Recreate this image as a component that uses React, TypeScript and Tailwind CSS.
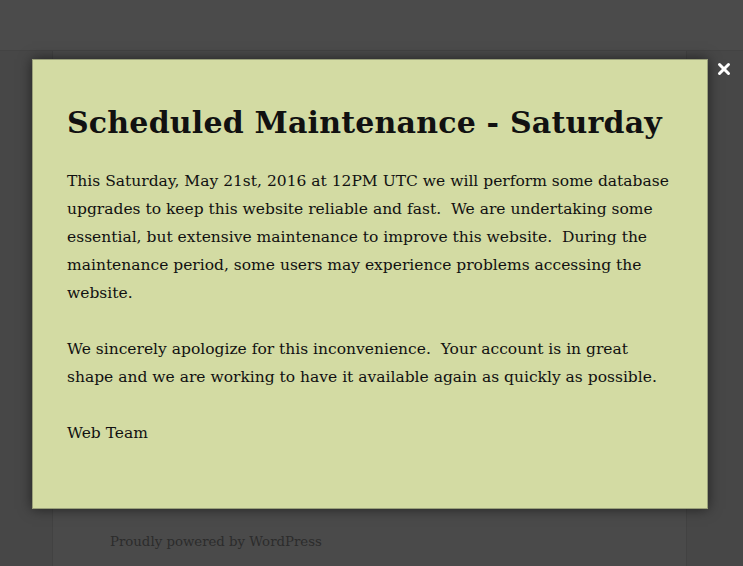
import { X } from "lucide-react";

const serif = "font-['DejaVu_Serif','Liberation_Serif',serif]";

export default function App() {
  return (
    <div className={`relative flex h-[566px] w-full flex-col overflow-hidden bg-[#474747] ${serif}`}>
      {/* Page behind the overlay */}
      <div className="h-[51px] shrink-0 border-b border-[#434343] bg-[#4b4b4b]" />
      <div className="ml-[52px] flex w-[635px] flex-1 flex-col border-x border-[#424242] bg-[#4a4a4a]">
        <p className="mt-auto pb-[14px] pl-[57px] text-[13.3px] text-[#2c2c2c]">
          Proudly powered by WordPress
        </p>
      </div>

      {/* Maintenance popup */}
      <div className="absolute left-[32px] top-[59px] w-[676px] border border-[#9aa07a] bg-[#d3dba3] px-[34px] pb-[61px] pt-[41px] text-[#111] shadow-[0_0_12px_rgba(0,0,0,0.55)]">
        <h1 className="text-[30px] font-bold leading-[44px] tracking-[0.2px]">
          Scheduled Maintenance - Saturday
        </h1>
        <div className="mt-[22px] space-y-[28px] text-[15.5px] leading-[28px]">
          <p>
            This Saturday, May 21st, 2016 at 12PM UTC we will perform some database<br />
            upgrades to keep this website reliable and fast.&nbsp; We are undertaking some<br />
            essential, but extensive maintenance to improve this website.&nbsp; During the<br />
            maintenance period, some users may experience problems accessing the<br />
            website.
          </p>
          <p>
            We sincerely apologize for this inconvenience.&nbsp; Your account is in great<br />
            shape and we are working to have it available again as quickly as possible.
          </p>
          <p>Web Team</p>
        </div>
      </div>

      <button
        type="button"
        title="Close"
        className="absolute left-[715px] top-[60px] flex size-[18px] items-center justify-center text-white"
      >
        <X className="size-[18px]" strokeWidth={4} />
      </button>
    </div>
  );
}
